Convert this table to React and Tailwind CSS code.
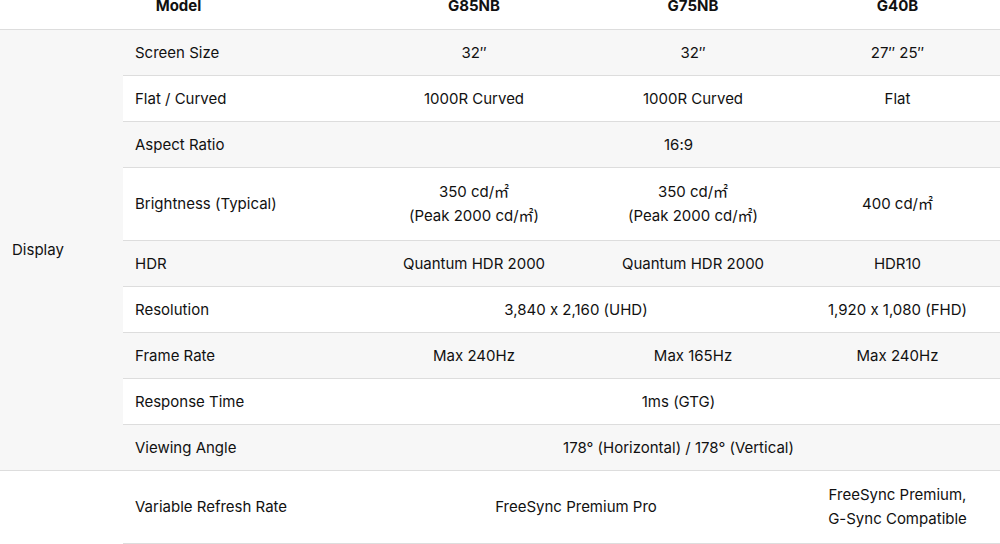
import React from "react";

const M2 = "㎡";

const rows = [
  { label: "Screen Size", cells: [["32″", 1], ["32″", 1], ["27″ 25″", 1]], bg: true },
  { label: "Flat / Curved", cells: [["1000R Curved", 1], ["1000R Curved", 1], ["Flat", 1]], bg: false },
  { label: "Aspect Ratio", cells: [["16:9", 3]], bg: true },
  {
    label: "Brightness (Typical)",
    cells: [
      [["350 cd/" + M2, "(Peak 2000 cd/" + M2 + ")"], 1],
      [["350 cd/" + M2, "(Peak 2000 cd/" + M2 + ")"], 1],
      ["400 cd/" + M2, 1],
    ],
    bg: false,
    tall: true,
  },
  { label: "HDR", cells: [["Quantum HDR 2000", 1], ["Quantum HDR 2000", 1], ["HDR10", 1]], bg: true },
  { label: "Resolution", cells: [["3,840 x 2,160 (UHD)", 2], ["1,920 x 1,080 (FHD)", 1]], bg: false },
  { label: "Frame Rate", cells: [["Max 240Hz", 1], ["Max 165Hz", 1], ["Max 240Hz", 1]], bg: true },
  { label: "Response Time", cells: [["1ms (GTG)", 3]], bg: false },
  { label: "Viewing Angle", cells: [["178° (Horizontal) / 178° (Vertical)", 3]], bg: true },
];

const spanClass = { 1: "", 2: "col-span-2", 3: "col-span-3" };

function Row({ r, last }) {
  return (
    <div
      className={`grid grid-cols-[234px_234px_204px_205px] ${
        r.tall ? "h-[73px]" : last ? "h-[45px]" : "h-[46px]"
      } ${r.bg ? "bg-[#f7f7f7]" : "bg-white"} ${last ? "" : "border-b border-[#dddddd]"}`}
    >
      <div className="flex items-center pl-3">{r.label}</div>
      {r.cells.map(([v, s], i) => (
        <div key={i} className={`flex flex-col items-center justify-center text-center ${spanClass[s]}`}>
          {Array.isArray(v) ? v.map((t, j) => <div key={j}>{t}</div>) : <div>{v}</div>}
        </div>
      ))}
    </div>
  );
}

export default function App() {
  return (
    <div
      className="w-[1000px] h-[544px] overflow-hidden bg-white text-[15px] leading-6 text-[#111111]"
      style={{
        fontFamily: "Inter, 'Noto Sans', 'Noto Sans CJK SC', sans-serif",
        fontFeatureSettings: "'calt' 0",
      }}
    >
      <div className="grid grid-cols-[357px_234px_204px_205px] h-[30px] border-b border-[#dddddd] font-bold">
        <div className="flex justify-center -mt-[6px]">Model</div>
        <div className="flex justify-center -mt-[6px]">G85NB</div>
        <div className="flex justify-center -mt-[6px]">G75NB</div>
        <div className="flex justify-center -mt-[6px]">G40B</div>
      </div>
      <div className="flex border-b border-[#dddddd]">
        <div className="w-[123px] bg-[#f7f7f7] flex items-center pl-3">Display</div>
        <div className="flex-1 flex flex-col">
          {rows.map((r, i) => (
            <Row key={i} r={r} last={i === rows.length - 1} />
          ))}
        </div>
      </div>
      <div className="flex">
        <div className="w-[123px] bg-white" />
        <div className="flex-1 grid grid-cols-[234px_234px_204px_205px] h-[73px] border-b border-[#dddddd]">
          <div className="flex items-center pl-3">Variable Refresh Rate</div>
          <div className="col-span-2 flex items-center justify-center">FreeSync Premium Pro</div>
          <div className="flex flex-col items-center justify-center text-center">
            <div>FreeSync Premium,</div>
            <div>G-Sync Compatible</div>
          </div>
        </div>
      </div>
    </div>
  );
}
